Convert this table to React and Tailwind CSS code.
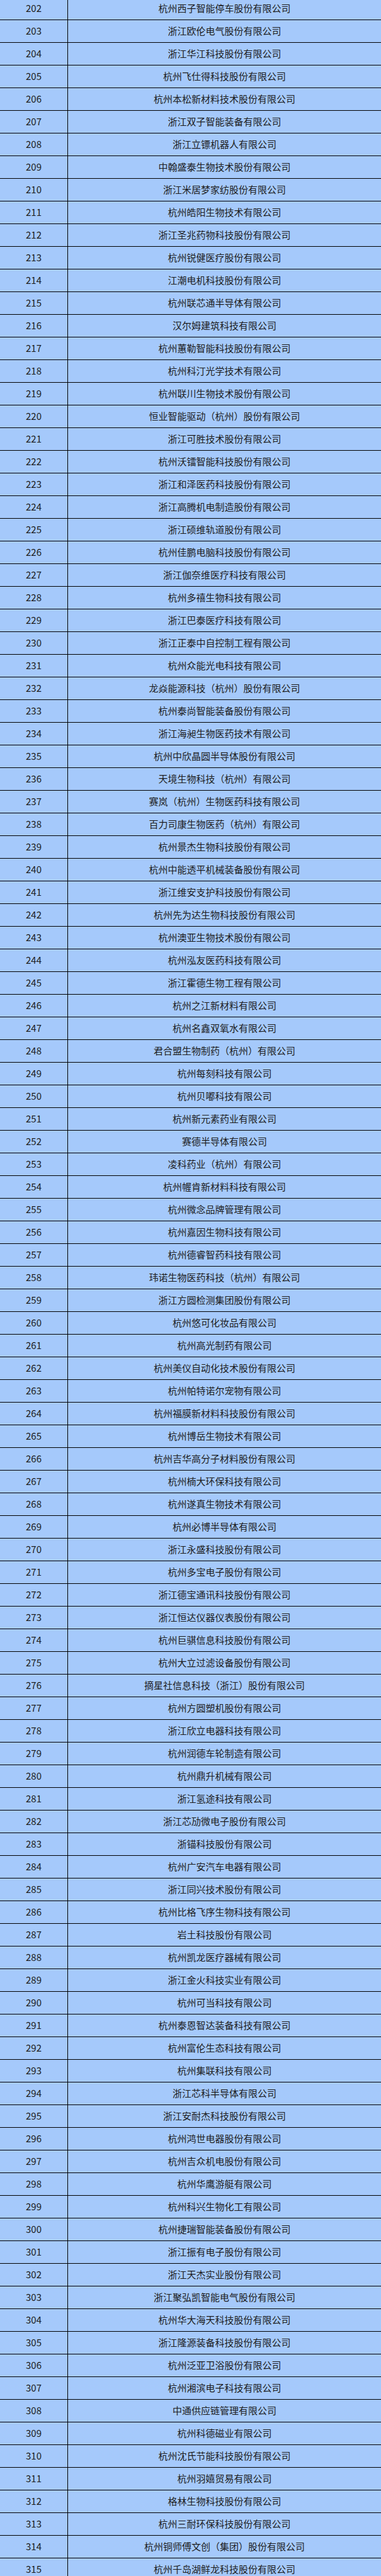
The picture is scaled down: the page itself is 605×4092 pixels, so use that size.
const companies = [
  '杭州西子智能停车股份有限公司',
  '浙江欧伦电气股份有限公司',
  '浙江华江科技股份有限公司',
  '杭州飞仕得科技股份有限公司',
  '杭州本松新材料技术股份有限公司',
  '浙江双子智能装备有限公司',
  '浙江立镖机器人有限公司',
  '中翰盛泰生物技术股份有限公司',
  '浙江米居梦家纺股份有限公司',
  '杭州皓阳生物技术有限公司',
  '浙江圣兆药物科技股份有限公司',
  '杭州锐健医疗股份有限公司',
  '江潮电机科技股份有限公司',
  '杭州联芯通半导体有限公司',
  '汉尔姆建筑科技有限公司',
  '杭州蕙勒智能科技股份有限公司',
  '杭州科汀光学技术有限公司',
  '杭州联川生物技术股份有限公司',
  '恒业智能驱动（杭州）股份有限公司',
  '浙江可胜技术股份有限公司',
  '杭州沃镭智能科技股份有限公司',
  '浙江和泽医药科技股份有限公司',
  '浙江高腾机电制造股份有限公司',
  '浙江硕维轨道股份有限公司',
  '杭州佳鹏电脑科技股份有限公司',
  '浙江伽奈维医疗科技有限公司',
  '杭州多禧生物科技有限公司',
  '浙江巴泰医疗科技有限公司',
  '浙江正泰中自控制工程有限公司',
  '杭州众能光电科技有限公司',
  '龙焱能源科技（杭州）股份有限公司',
  '杭州泰尚智能装备股份有限公司',
  '浙江海昶生物医药技术有限公司',
  '杭州中欣晶圆半导体股份有限公司',
  '天境生物科技（杭州）有限公司',
  '赛岚（杭州）生物医药科技有限公司',
  '百力司康生物医药（杭州）有限公司',
  '杭州景杰生物科技股份有限公司',
  '杭州中能透平机械装备股份有限公司',
  '浙江维安支护科技股份有限公司',
  '杭州先为达生物科技股份有限公司',
  '杭州澳亚生物技术股份有限公司',
  '杭州泓友医药科技有限公司',
  '浙江霍德生物工程有限公司',
  '杭州之江新材料有限公司',
  '杭州名鑫双氧水有限公司',
  '君合盟生物制药（杭州）有限公司',
  '杭州每刻科技有限公司',
  '杭州贝嘟科技有限公司',
  '杭州新元素药业有限公司',
  '赛德半导体有限公司',
  '凌科药业（杭州）有限公司',
  '杭州幄肯新材料科技有限公司',
  '杭州微念品牌管理有限公司',
  '杭州嘉因生物科技有限公司',
  '杭州德睿智药科技有限公司',
  '玮诺生物医药科技（杭州）有限公司',
  '浙江方圆检测集团股份有限公司',
  '杭州悠可化妆品有限公司',
  '杭州高光制药有限公司',
  '杭州美仪自动化技术股份有限公司',
  '杭州帕特诺尔宠物有限公司',
  '杭州福膜新材料科技股份有限公司',
  '杭州博岳生物技术有限公司',
  '杭州吉华高分子材料股份有限公司',
  '杭州楠大环保科技有限公司',
  '杭州遂真生物技术有限公司',
  '杭州必博半导体有限公司',
  '浙江永盛科技股份有限公司',
  '杭州多宝电子股份有限公司',
  '浙江德宝通讯科技股份有限公司',
  '浙江恒达仪器仪表股份有限公司',
  '杭州巨骐信息科技股份有限公司',
  '杭州大立过滤设备股份有限公司',
  '摘星社信息科技（浙江）股份有限公司',
  '杭州方圆塑机股份有限公司',
  '浙江欣立电器科技有限公司',
  '杭州润德车轮制造有限公司',
  '杭州鼎升机械有限公司',
  '浙江氢途科技有限公司',
  '浙江芯劢微电子股份有限公司',
  '浙锚科技股份有限公司',
  '杭州广安汽车电器有限公司',
  '浙江同兴技术股份有限公司',
  '杭州比格飞序生物科技有限公司',
  '岩土科技股份有限公司',
  '杭州凯龙医疗器械有限公司',
  '浙江金火科技实业有限公司',
  '杭州可当科技有限公司',
  '杭州泰恩智达装备科技有限公司',
  '杭州富伦生态科技有限公司',
  '杭州集联科技有限公司',
  '浙江芯科半导体有限公司',
  '浙江安耐杰科技股份有限公司',
  '杭州鸿世电器股份有限公司',
  '杭州吉众机电股份有限公司',
  '杭州华鹰游艇有限公司',
  '杭州科兴生物化工有限公司',
  '杭州捷瑞智能装备股份有限公司',
  '浙江振有电子股份有限公司',
  '浙江天杰实业股份有限公司',
  '浙江聚弘凯智能电气股份有限公司',
  '杭州华大海天科技股份有限公司',
  '浙江隆源装备科技股份有限公司',
  '杭州泛亚卫浴股份有限公司',
  '杭州湘滨电子科技有限公司',
  '中通供应链管理有限公司',
  '杭州科德磁业有限公司',
  '杭州沈氏节能科技股份有限公司',
  '杭州羽嬉贸易有限公司',
  '格林生物科技股份有限公司',
  '杭州三耐环保科技股份有限公司',
  '杭州铜师傅文创（集团）股份有限公司',
  '杭州千岛湖鲜龙科技股份有限公司',
];

const FIRST_NO = 202;

function Row({ no, name }) {
  return (
    <div className="flex h-[36px] border-b border-black">
      <div className="flex w-[108px] shrink-0 items-center justify-center border-r border-black">
        {no}
      </div>
      <div className="flex flex-1 items-center justify-center whitespace-nowrap">{name}</div>
    </div>
  );
}

export default function App() {
  return (
    <div className="h-[4092px] overflow-hidden bg-[#a5c9fb] text-[15px] text-[#1c1c1c] [font-family:'Noto_Sans_CJK_SC','Noto_Sans',sans-serif]">
      <div className="-mt-[4px]">
        {companies.map((name, i) => (
          <Row key={i} no={FIRST_NO + i} name={name} />
        ))}
      </div>
    </div>
  );
}
